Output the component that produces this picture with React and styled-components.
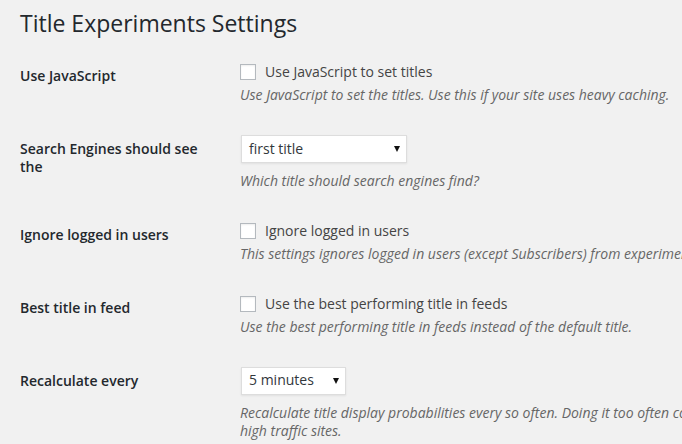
import React from "react";
import styled, { createGlobalStyle } from "styled-components";

const GlobalStyle = createGlobalStyle`
  html, body {
    margin: 0;
    padding: 0;
    background: #f1f1f1;
    overflow: hidden;
  }
  body {
    font-family: "Open Sans", "Liberation Sans", sans-serif;
    font-size: 13px;
    color: #444;
  }
`;

const settings = [
    {
        label: "Use JavaScript",
        type: "checkbox",
        text: "Use JavaScript to set titles",
        description: "Use JavaScript to set the titles. Use this if your site uses heavy caching."
    },
    {
        label: "Search Engines should see the",
        type: "select",
        value: "first title",
        width: 166,
        description: "Which title should search engines find?"
    },
    {
        label: "Ignore logged in users",
        type: "checkbox",
        text: "Ignore logged in users",
        description: "This settings ignores logged in users (except Subscribers) from experiments."
    },
    {
        label: "Best title in feed",
        type: "checkbox",
        text: "Use the best performing title in feeds",
        description: "Use the best performing title in feeds instead of the default title."
    },
    {
        label: "Recalculate every",
        type: "select",
        value: "5 minutes",
        width: 105,
        description: "Recalculate title display probabilities every so often. Doing it too often could cause performance issues on high traffic sites."
    }
];

const App = () => {
    return (
        <>
            <GlobalStyle />
            <Wrap>
                <Title>Title Experiments Settings</Title>
                <FormTable>
                    {settings.map((s) => (
                        <Row key={s.label}>
                            <Label>{s.label}</Label>
                            <Field>
                                {s.type === "checkbox" ? (
                                    <CheckLabel>
                                        <Checkbox type="checkbox" />
                                        {s.text}
                                    </CheckLabel>
                                ) : (
                                    <SelectBox $width={s.width}>
                                        <span>{s.value}</span>
                                        <Arrow />
                                    </SelectBox>
                                )}
                                <Description>{s.description}</Description>
                            </Field>
                        </Row>
                    ))}
                </FormTable>
            </Wrap>
        </>
    );
};

export default App;

const Wrap = styled.div`
    padding: 0 0 0 20px;
    width: 960px;
`;

const Title = styled.h1`
    margin: 0;
    padding: 9px 0 4px;
    font-size: 23px;
    font-weight: 400;
    line-height: 29px;
    color: #23282d;
`;

const FormTable = styled.div`
    margin-top: 5px;
    display: flex;
    flex-direction: column;
`;

const Row = styled.div`
    display: flex;
    align-items: flex-start;
`;

const Label = styled.div`
    box-sizing: content-box;
    width: 200px;
    padding: 20px 10px 20px 0;
    font-size: 14px;
    font-weight: 600;
    line-height: 1.3;
    color: #23282d;
`;

const Field = styled.div`
    width: 660px;
    padding: 15px 10px;
    line-height: 1.3;
    font-size: 14px;
`;

const CheckLabel = styled.label`
    display: flex;
    align-items: center;
    height: 20px;
    font-size: 14px;
    color: #444;
`;

const Checkbox = styled.input`
    appearance: none;
    box-sizing: border-box;
    width: 16px;
    height: 16px;
    margin: 0 9px 0 0;
    border: 1px solid #b4b9be;
    background: #fff;
    box-shadow: inset 0 1px 2px rgba(0, 0, 0, 0.07);
`;

const SelectBox = styled.div`
    box-sizing: border-box;
    display: flex;
    align-items: center;
    justify-content: space-between;
    width: ${(p) => p.$width}px;
    height: 28px;
    margin: 0 0 9px 1px;
    padding: 0 6px 0 7px;
    border: 1px solid #ddd;
    background: #fff;
    box-shadow: 0 1px 2px rgba(0, 0, 0, 0.07);
    font-size: 14px;
    color: #32373c;
`;

const Arrow = styled.span`
    width: 0;
    height: 0;
    margin-top: 1px;
    border-left: 3px solid transparent;
    border-right: 3px solid transparent;
    border-top: 6px solid #111;
`;

const Description = styled.p`
    margin: 4px 0 0;
    font-size: 14px;
    font-style: italic;
    line-height: 1.35;
    color: #666;
`;
